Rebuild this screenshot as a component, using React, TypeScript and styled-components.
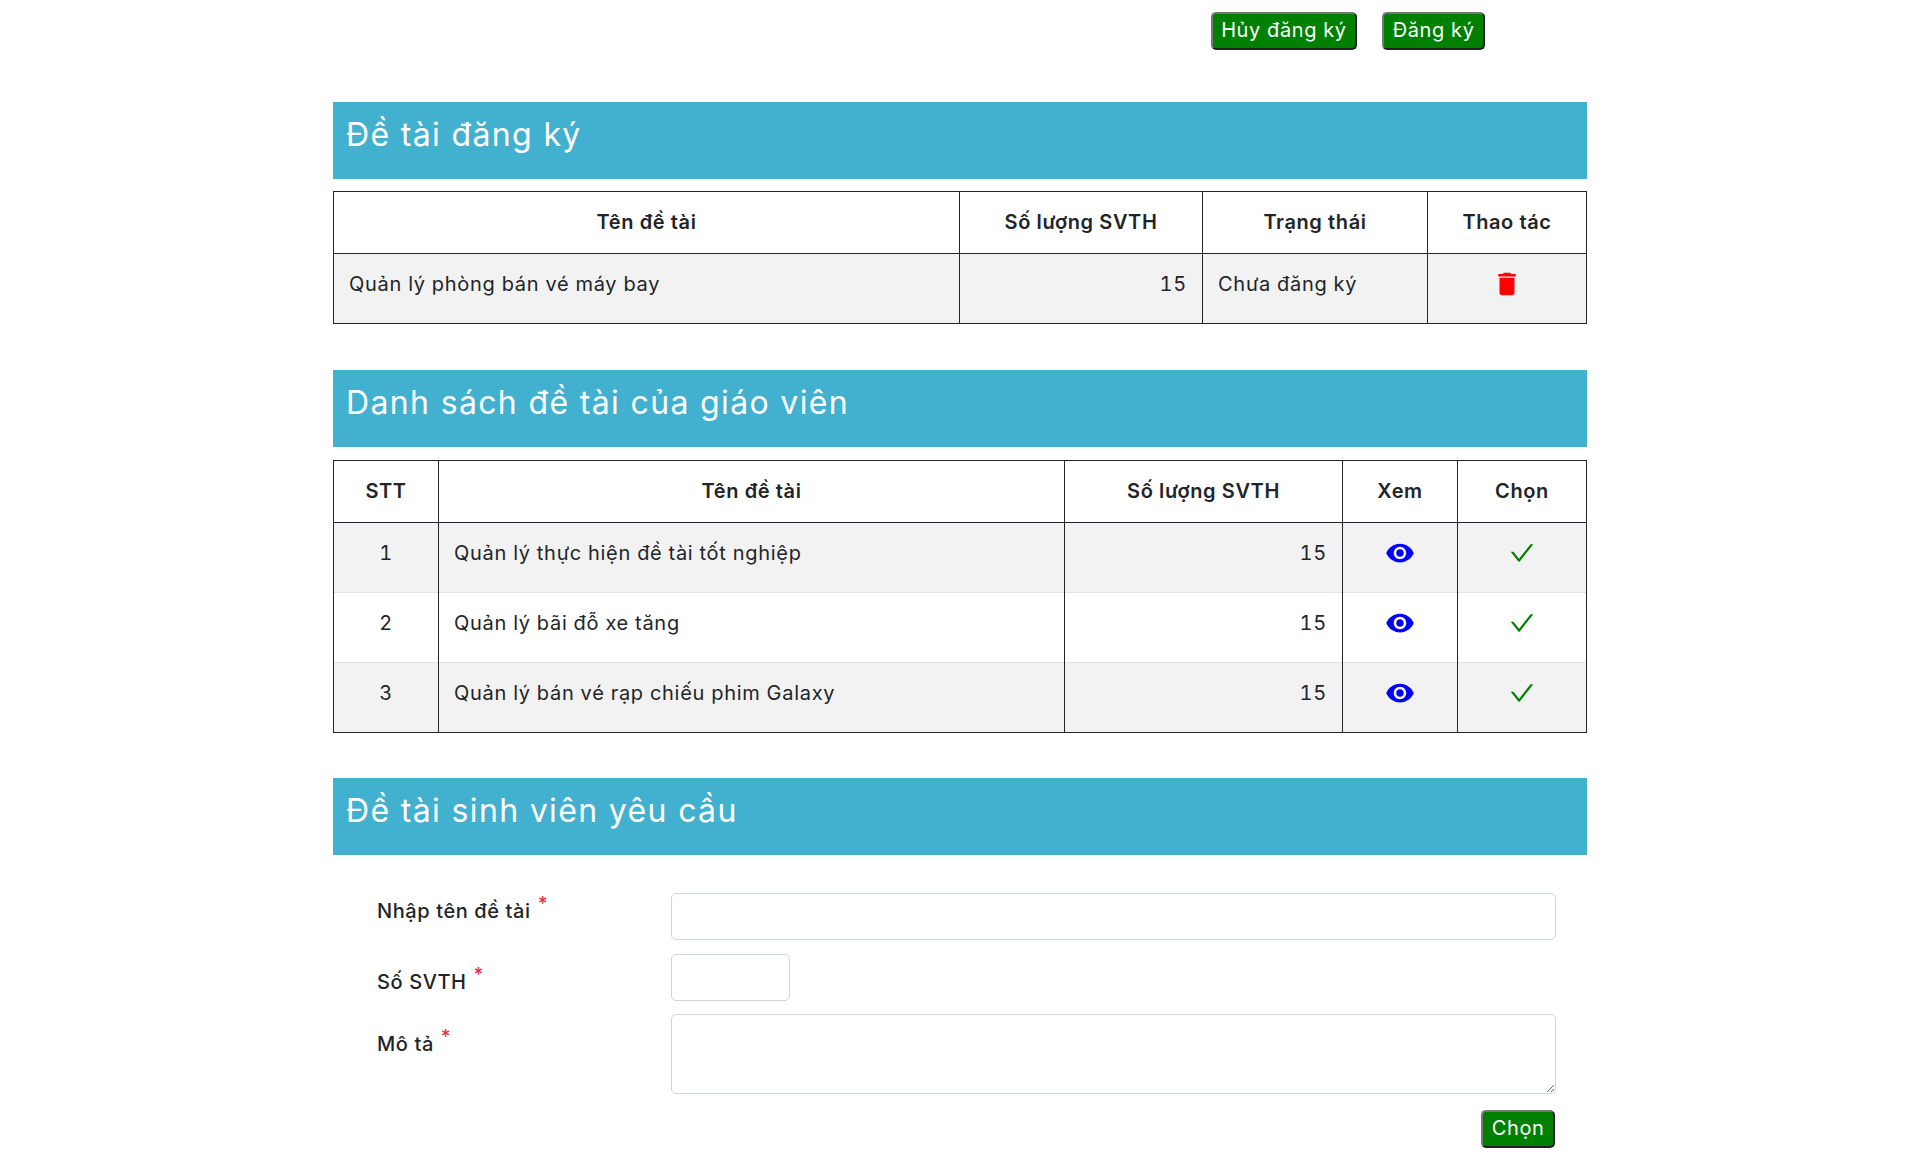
import React from "react";
import styled, { createGlobalStyle } from "styled-components";
import { MdDelete, MdRemoveRedEye } from "react-icons/md";
import { AiOutlineCheck } from "react-icons/ai";

const registered = [{ name: "Quản lý phòng bán vé máy bay", count: 15, status: "Chưa đăng ký" }];

const topics = [
  { id: 1, name: "Quản lý thực hiện đề tài tốt nghiệp", count: 15 },
  { id: 2, name: "Quản lý bãi đỗ xe tăng", count: 15 },
  { id: 3, name: "Quản lý bán vé rạp chiếu phim Galaxy", count: 15 },
];

function App() {
  return (
    <Page>
      <GlobalStyle />
      <TopActions>
        <GreenButton>Hủy đăng ký</GreenButton>
        <GreenButton>Đăng ký</GreenButton>
      </TopActions>

      <SectionTitle>Đề tài đăng ký</SectionTitle>
      <Table>
        <colgroup>
          <col width={626} />
          <col width={243} />
          <col width={225} />
          <col width={159} />
        </colgroup>
        <thead>
          <tr>
            <Th>Tên đề tài</Th>
            <Th>Số lượng SVTH</Th>
            <Th>Trạng thái</Th>
            <Th>Thao tác</Th>
          </tr>
        </thead>
        <tbody>
          {registered.map((row) => (
            <Row key={row.name} $striped>
              <Td>{row.name}</Td>
              <Td $align="right">{row.count}</Td>
              <Td>{row.status}</Td>
              <Td $align="center">
                <TrashIcon />
              </Td>
            </Row>
          ))}
        </tbody>
      </Table>

      <SectionTitle $gap={13}>Danh sách đề tài của giáo viên</SectionTitle>
      <Table $after={45}>
        <colgroup>
          <col width={105} />
          <col width={626} />
          <col width={278} />
          <col width={115} />
          <col width={129} />
        </colgroup>
        <thead>
          <tr>
            <Th>STT</Th>
            <Th>Tên đề tài</Th>
            <Th>Số lượng SVTH</Th>
            <Th>Xem</Th>
            <Th>Chọn</Th>
          </tr>
        </thead>
        <tbody>
          {topics.map((row) => (
            <Row key={row.id} $striped={row.id % 2 === 1}>
              <Td $align="center">{row.id}</Td>
              <Td>{row.name}</Td>
              <Td $align="right">{row.count}</Td>
              <Td $align="center">
                <EyeIcon />
              </Td>
              <Td $align="center">
                <CheckIcon />
              </Td>
            </Row>
          ))}
        </tbody>
      </Table>

      <SectionTitle>Đề tài sinh viên yêu cầu</SectionTitle>
      <Form>
        <FormRow>
          <Label $offset={6}>
            Nhập tên đề tài <Required>*</Required>
          </Label>
          <TextInput />
        </FormRow>
        <FormRow>
          <Label $offset={16}>
            Số SVTH <Required>*</Required>
          </Label>
          <TextInput $short />
        </FormRow>
        <FormRow>
          <Label $offset={18}>
            Mô tả <Required>*</Required>
          </Label>
          <TextArea />
        </FormRow>
        <FormActions>
          <GreenButton>Chọn</GreenButton>
        </FormActions>
      </Form>
    </Page>
  );
}

const GlobalStyle = createGlobalStyle`
  body {
    margin: 0;
    background: #fff;
    font-family: "Inter", "Noto Sans", sans-serif;
    color: #212529;
    letter-spacing: 0.6px;
  }
`;

const Page = styled.div`
  width: 1254px;
  margin: 0 auto;
`;

const TopActions = styled.div`
  display: flex;
  justify-content: flex-end;
  gap: 25px;
  padding: 12px 102px 52px 0;
`;

const GreenButton = styled.button`
  height: 38px;
  padding: 0 8.5px 2px;
  background: green;
  border: 2px solid;
  border-color: #767676 #1f1f1f #1f1f1f #767676;
  border-radius: 5px;
  color: #fff;
  font-family: "Inter", "Noto Sans", sans-serif;
  font-size: 20px;
  letter-spacing: 0.6px;
`;

const SectionTitle = styled.h2<{ $gap?: number }>`
  height: 77px;
  margin: 0 0 ${(p) => p.$gap || 12}px;
  padding: 14px 13px 0;
  box-sizing: border-box;
  background: #41b1cf;
  color: #fff;
  font-size: 32px;
  font-weight: 400;
  letter-spacing: 1.35px;
  line-height: 38px;
`;

const Table = styled.table<{ $after?: number }>`
  width: calc(100% - 1px);
  margin-bottom: ${(p) => p.$after || 46}px;
  border-collapse: collapse;
  table-layout: fixed;
  border: 1px solid #212529;
`;

const Th = styled.th`
  height: 62px;
  padding: 0 15px 2px;
  box-sizing: border-box;
  border: 1px solid #212529;
  font-size: 20px;
  font-weight: 600;
  text-align: center;
`;

const Row = styled.tr<{ $striped?: boolean }>`
  background: ${(p) => (p.$striped ? "#f2f2f2" : "#fff")};
  border-bottom: 1px solid #dee2e6;

  &:last-child {
    border-bottom: 1px solid #212529;
  }
`;

const Td = styled.td<{ $align?: string }>`
  height: 70px;
  padding: 15px 15px 23px;
  box-sizing: border-box;
  border-left: 1px solid #212529;
  border-right: 1px solid #212529;
  font-size: 20px;
  font-variant-numeric: tabular-nums;
  letter-spacing: 0.72px;
  line-height: 30px;
  text-align: ${(p) => p.$align || "left"};
  vertical-align: top;
`;

const TrashIcon = styled(MdDelete)`
  display: block;
  width: 30px;
  height: 30px;
  margin: 0 auto;
  color: red;
`;

const EyeIcon = styled(MdRemoveRedEye)`
  display: block;
  width: 30px;
  height: 30px;
  margin: 0 auto;
  color: blue;
`;

const CheckIcon = styled(AiOutlineCheck)`
  display: block;
  width: 28px;
  height: 28px;
  margin: 1px auto;
  color: green;
`;

const Form = styled.form`
  padding: 26px 31px 0 44px;
`;

const FormRow = styled.div`
  display: flex;
  align-items: flex-start;
  margin-bottom: 13.5px;
`;

const Label = styled.label<{ $offset: number }>`
  width: 294px;
  padding-top: ${(p) => p.$offset}px;
  font-size: 20px;
  font-weight: 500;
  line-height: 24px;
`;

const Required = styled.sup`
  margin-left: 1px;
  color: #dc3545;
  font-size: 19px;
  line-height: 0;
  vertical-align: 8px;
`;

const TextInput = styled.input<{ $short?: boolean }>`
  width: ${(p) => (p.$short ? "119px" : "885px")};
  height: 47px;
  box-sizing: border-box;
  border: 1px solid #ced4da;
  border-radius: 5px;
`;

const TextArea = styled.textarea`
  width: 885px;
  height: 80px;
  box-sizing: border-box;
  border: 1px solid #ced4da;
  border-radius: 5px;
`;

const FormActions = styled.div`
  display: flex;
  justify-content: flex-end;
  margin: 16px 1px 0 0;
`;

export default App;
